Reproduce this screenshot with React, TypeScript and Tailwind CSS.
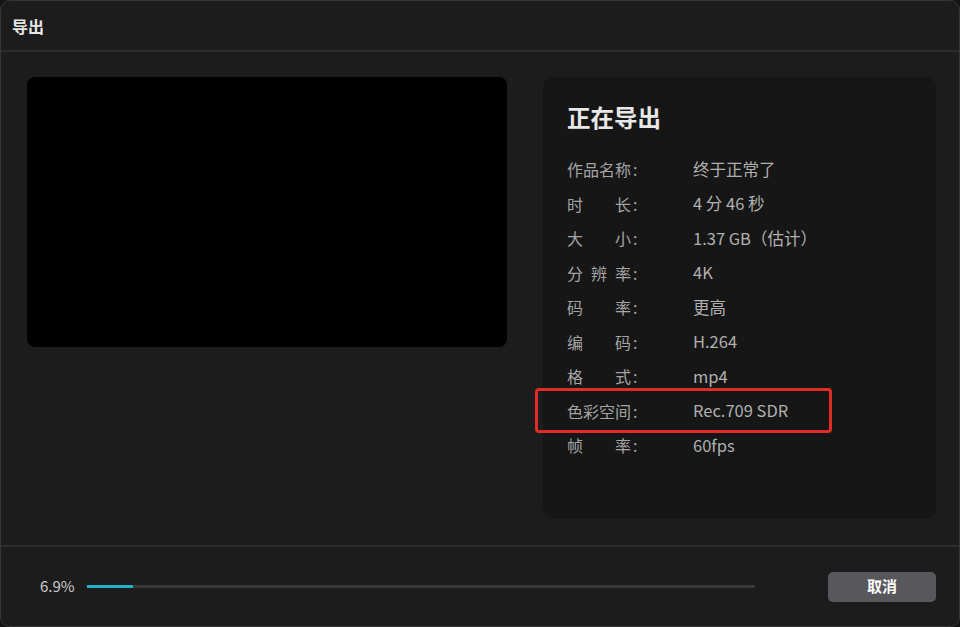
import React from "react";

const rows: { label: string[]; value: string; highlight?: boolean }[] = [
  { label: ["作", "品", "名", "称"], value: "终于正常了" },
  { label: ["时", "长"], value: "4 分 46 秒" },
  { label: ["大", "小"], value: "1.37 GB（估计）" },
  { label: ["分", "辨", "率"], value: "4K" },
  { label: ["码", "率"], value: "更高" },
  { label: ["编", "码"], value: "H.264" },
  { label: ["格", "式"], value: "mp4" },
  { label: ["色", "彩", "空", "间"], value: "Rec.709 SDR", highlight: true },
  { label: ["帧", "率"], value: "60fps" },
];

export default function App() {
  const progress = 6.9;
  return (
    <div
      className="w-[960px] h-[627px] bg-[#141414]"
      style={{ fontFamily: '"Noto Sans CJK SC", "Noto Sans", sans-serif' }}
    >
      <div className="w-full h-full rounded-[10px] border border-[#363636] bg-[#1c1c1c] flex flex-col overflow-hidden">
        {/* header */}
        <div className="h-[51px] shrink-0 flex items-center pl-[11px] border-b-2 border-[#2c2c2c]">
          <span className="text-[16px] font-bold text-[#e6e6e6] leading-none">导出</span>
        </div>
        {/* main */}
        <div className="flex-1 flex pt-[25px] pl-[26px] pr-[23px] gap-[36px]">
          <div className="w-[480px] h-[270px] bg-black rounded-[8px] shrink-0" />
          <div className="flex-1 h-[442px] bg-[#161616] rounded-[10px] pt-[24px] pl-[24px] relative">
            <div className="text-[23.5px] font-bold text-[#e8e8e8] leading-[32px]">正在导出</div>
            <div className="mt-[19px] flex flex-col">
              {rows.map((r, i) => (
                <div key={i} className="relative h-[34.5px] flex items-center text-[16px] text-[#a4a4a4]">
                  {r.highlight && (
                    <div className="absolute left-[-32px] top-[-6px] w-[297px] h-[45px] border-[3px] border-[#e02b26] rounded-[4px]" />
                  )}
                  <div className="w-[126px] flex items-center shrink-0">
                    <span className="w-[64px] flex justify-between">
                      {r.label.map((c, j) => (
                        <span key={j}>{c}</span>
                      ))}
                    </span>
                    <span className="ml-[2px]">:</span>
                  </div>
                  <span className="text-[#b0b0b0] text-[16.5px]">{r.value}</span>
                </div>
              ))}
            </div>
          </div>
        </div>
        {/* footer */}
        <div className="h-[81px] shrink-0 border-t-2 border-[#2c2c2c] flex items-center pl-[39px] pr-[23px]">
          <span className="text-[15px] text-[#cccccc] w-[47px]">6.9%</span>
          <div className="w-[668px] h-[3px] bg-[#383838] relative">
            <div className="absolute left-0 top-0 h-full bg-[#22b4c4]" style={{ width: `${progress}%` }} />
          </div>
          <div className="flex-1" />
          <button className="w-[108px] h-[30px] rounded-[5px] bg-[#58585c] text-white text-[15px] font-bold">
            取消
          </button>
        </div>
      </div>
    </div>
  );
}
